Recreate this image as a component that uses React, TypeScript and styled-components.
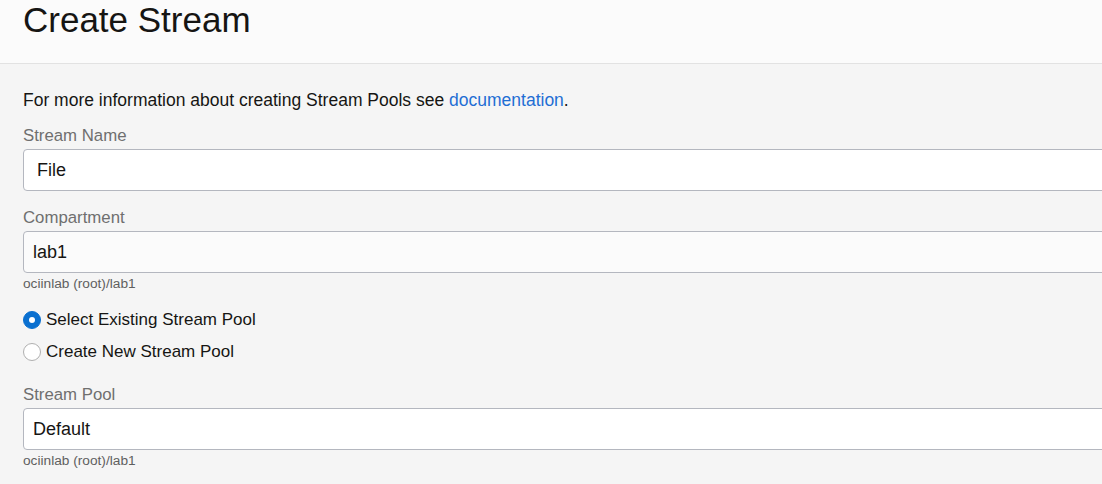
import React from "react";
import styled, { createGlobalStyle } from "styled-components";

const GlobalStyle = createGlobalStyle`
  html, body {
    margin: 0;
    padding: 0;
    background: #f5f5f5;
    font-family: "Liberation Sans", Arial, sans-serif;
  }
  * { box-sizing: border-box; }
`;

const Page = styled.div`
  width: 1102px;
  height: 484px;
  overflow: hidden;
  background: #f5f5f5;
`;

const Header = styled.header`
  height: 64px;
  padding: 0 23px;
  background: #fbfbfb;
  border-bottom: 1px solid #e2e2e2;
`;

const Title = styled.h1`
  margin: 0;
  font-size: 35px;
  line-height: 40px;
  font-weight: 400;
  color: #161513;
`;

const Body = styled.main`
  padding: 26px 0 0 23px;
  display: flex;
  flex-direction: column;
`;

const Intro = styled.p`
  margin: 0;
  font-size: 17.5px;
  line-height: 20px;
  color: #161513;
`;

const Link = styled.a`
  color: #1f6ed4;
  text-decoration: none;
`;

const Field = styled.div<{ $gap: number }>`
  display: flex;
  flex-direction: column;
  margin-top: ${(p) => p.$gap}px;
`;

const Label = styled.label`
  font-size: 16.8px;
  line-height: 20px;
  color: #6f6f6f;
  margin-bottom: 3px;
`;

const TextInput = styled.input<{ $pad: number; $muted?: boolean }>`
  width: 1120px;
  height: 42px;
  margin: 0;
  padding: 0 ${(p) => p.$pad}px;
  border: 1px solid #b4b7bf;
  border-radius: 4px;
  background: ${(p) => (p.$muted ? "#fbfbfb" : "#ffffff")};
  font-family: "Liberation Sans", Arial, sans-serif;
  font-size: 18px;
  color: #161513;
  outline: none;
`;

const Helper = styled.div`
  margin-top: 3px;
  font-size: 13.7px;
  line-height: 16px;
  color: #5f5f5f;
`;

const RadioGroup = styled.div`
  display: flex;
  flex-direction: column;
  margin-top: 12px;
`;

const RadioRow = styled.label`
  display: flex;
  align-items: center;
  height: 32px;
  font-size: 17px;
  line-height: 32px;
  color: #161513;
`;

const RadioDot = styled.span<{ $checked?: boolean }>`
  width: 18px;
  height: 18px;
  border-radius: 50%;
  margin-right: 5px;
  flex-shrink: 0;
  display: flex;
  align-items: center;
  justify-content: center;
  background: ${(p) => (p.$checked ? "#0a70d0" : "#ffffff")};
  border: 1px solid ${(p) => (p.$checked ? "#0a70d0" : "#b0b0b0")};
  &::after {
    content: "";
    width: 6px;
    height: 6px;
    border-radius: 50%;
    background: #ffffff;
    display: ${(p) => (p.$checked ? "block" : "none")};
  }
`;

export default function App() {
  return (
    <Page>
      <GlobalStyle />
      <Header>
        <Title>Create Stream</Title>
      </Header>
      <Body>
        <Intro>
          For more information about creating Stream Pools see{" "}
          <Link href="#">documentation</Link>.
        </Intro>
        <Field $gap={16}>
          <Label>Stream Name</Label>
          <TextInput $pad={13} value="File" readOnly />
        </Field>
        <Field $gap={17}>
          <Label>Compartment</Label>
          <TextInput $pad={9} $muted value="lab1" readOnly />
          <Helper>ociinlab (root)/lab1</Helper>
        </Field>
        <RadioGroup>
          <RadioRow>
            <RadioDot $checked />
            Select Existing Stream Pool
          </RadioRow>
          <RadioRow>
            <RadioDot />
            Create New Stream Pool
          </RadioRow>
        </RadioGroup>
        <Field $gap={17}>
          <Label>Stream Pool</Label>
          <TextInput $pad={9} value="Default" readOnly />
          <Helper>ociinlab (root)/lab1</Helper>
        </Field>
      </Body>
    </Page>
  );
}
